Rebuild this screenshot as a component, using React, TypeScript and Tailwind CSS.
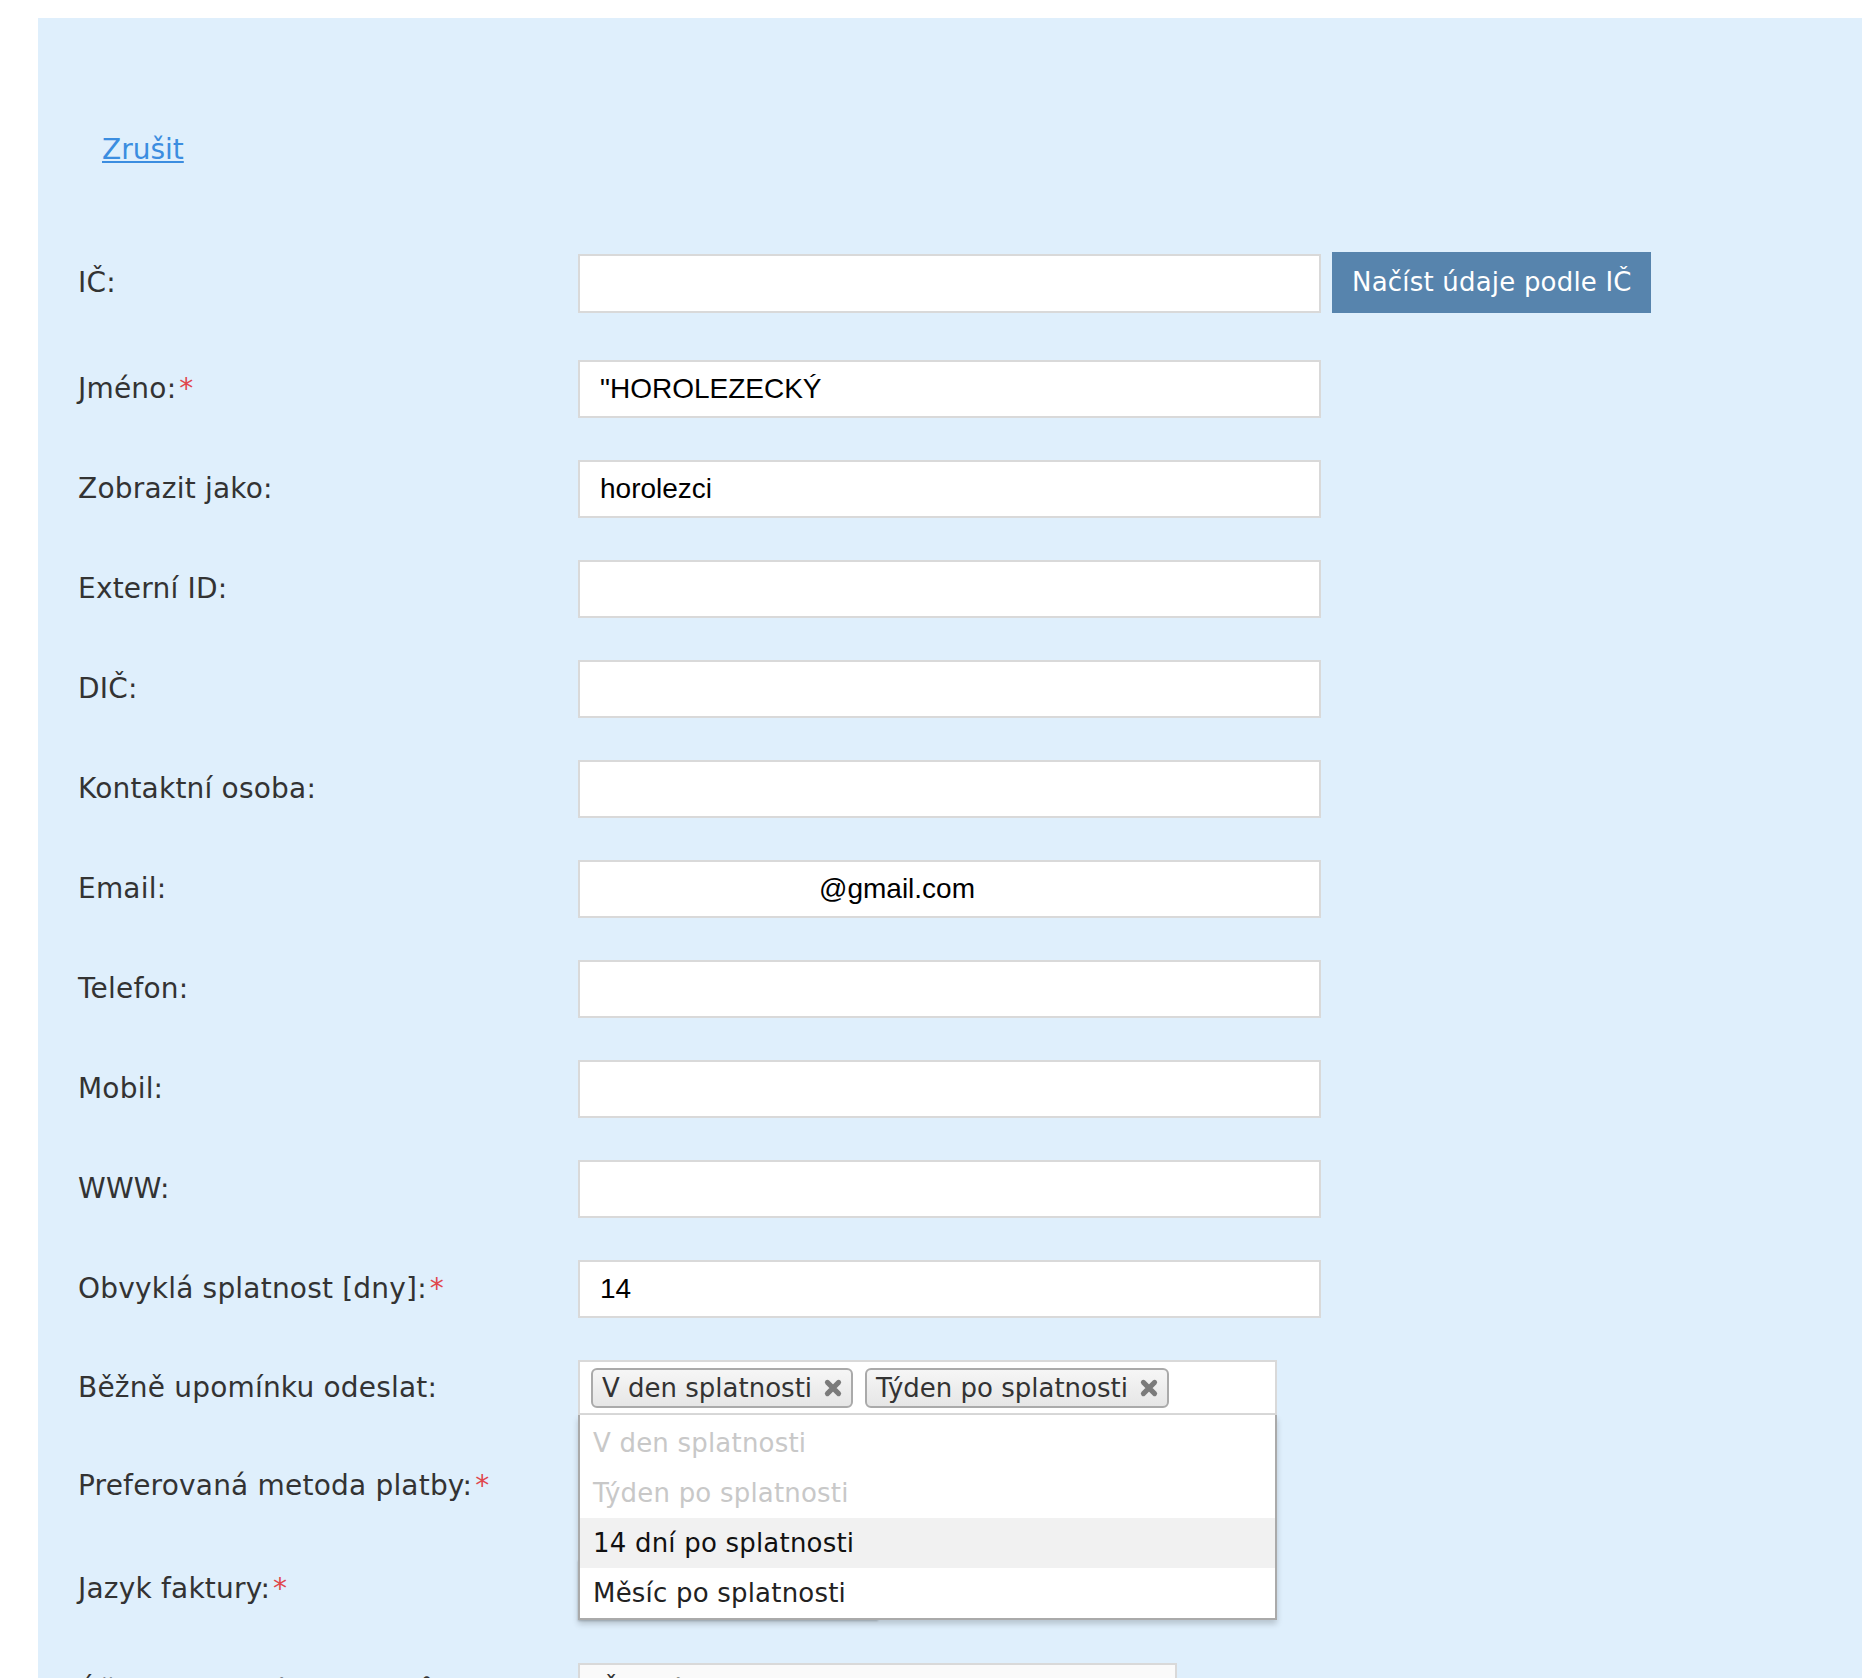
import React from "react";

const labelCls =
  "w-[500px] shrink-0 text-[28px] leading-[34px] tracking-[0.2px] text-[#333] font-['DejaVu_Sans',sans-serif]";
const inputCls =
  "h-[58px] w-[743px] border-2 border-[#d9d9d9] bg-white pl-[20px] text-[28px] text-black font-['Liberation_Sans',Arial,sans-serif] outline-none";

function Star() {
  return <span className="ml-[3px] text-[#e0474c]">*</span>;
}

function XIcon() {
  return (
    <svg width="20" height="20" viewBox="0 0 16 16" className="shrink-0">
      <path d="M3.5 3.5 L12.5 12.5 M12.5 3.5 L3.5 12.5" stroke="#7b7b7b" strokeWidth="4" strokeLinecap="round" />
    </svg>
  );
}

function Tag({ text }: { text: string }) {
  return (
    <div className="flex h-[40px] items-center gap-[11px] rounded-[6px] border-2 border-[#aaa] bg-gradient-to-b from-[#f6f6f6] to-[#e6e6e6] pl-[9px] pr-[8px] text-[26px] text-[#333] font-['DejaVu_Sans',sans-serif] leading-none">
      <span>{text}</span>
      <XIcon />
    </div>
  );
}

function Row({
  label,
  required,
  value,
  mt,
}: {
  label: string;
  required?: boolean;
  value?: string;
  mt: string;
}) {
  return (
    <div className={`flex items-center ${mt}`}>
      <div className={labelCls}>
        {label}
        {required && <Star />}
      </div>
      <input readOnly value={value ?? ""} className={inputCls} />
    </div>
  );
}

export default function App() {
  return (
    <div className="h-[1678px] w-[1862px] overflow-hidden bg-white pl-[38px] pt-[18px]">
      <div className="h-[1660px] w-full bg-[#dfeffc] pl-[40px] pt-[115px]">
        <a
          href="#"
          className="ml-[24px] block w-fit text-[28px] leading-[34px] text-[#3b8de0] underline font-['DejaVu_Sans',sans-serif]"
        >
          Zrušit
        </a>

        <div className="mt-[85px] flex flex-col">
          {/* IČ */}
          <div className="flex h-[61px] items-end">
            <div className={`${labelCls} self-center`}>IČ:</div>
            <input readOnly value="" className="h-[59px] w-[743px] border-2 border-[#d9d9d9] bg-white outline-none" />
            <button className="ml-[11px] h-[61px] w-[319px] bg-[#5784ad] pl-[20px] text-left text-[26px] tracking-[0.2px] text-white font-['DejaVu_Sans',sans-serif]">
              Načíst údaje podle IČ
            </button>
          </div>

          <Row label="Jméno:" required value={'"HOROLEZECKÝ'} mt="mt-[47px]" />
          <Row label="Zobrazit jako:" value="horolezci" mt="mt-[42px]" />
          <Row label="Externí ID:" mt="mt-[42px]" />
          <Row label="DIČ:" mt="mt-[42px]" />
          <Row label="Kontaktní osoba:" mt="mt-[42px]" />
          <div className="mt-[42px] flex items-center">
            <div className={labelCls}>Email:</div>
            <input readOnly value="@gmail.com" className="h-[58px] w-[743px] border-2 border-[#d9d9d9] bg-white pl-[239px] text-[28px] text-black font-['Liberation_Sans',Arial,sans-serif] outline-none" />
          </div>
          <Row label="Telefon:" mt="mt-[42px]" />
          <Row label="Mobil:" mt="mt-[42px]" />
          <Row label="WWW:" mt="mt-[42px]" />
          <Row label="Obvyklá splatnost [dny]:" required value="14" mt="mt-[42px]" />

          {/* Multiselect */}
          <div className="mt-[42px] flex items-center">
            <div className={labelCls}>Běžně upomínku odeslat:</div>
            <div className="relative z-10 w-[699px]">
              <div className="flex h-[55px] items-center gap-[12px] border-2 border-[#d9d9d9] bg-white pl-[11px]">
                <Tag text="V den splatnosti" />
                <Tag text="Týden po splatnosti" />
              </div>
              <div className="absolute left-0 top-full w-full border-2 border-t-0 border-[#aaa] bg-white pt-[3px] shadow-[0_4px_6px_rgba(0,0,0,0.18)] text-[26px] tracking-[0.2px] font-['DejaVu_Sans',sans-serif]">
                <div className="flex h-[50px] items-center pl-[13px] text-[#c8c8c8]">V den splatnosti</div>
                <div className="flex h-[50px] items-center pl-[13px] text-[#c8c8c8]">Týden po splatnosti</div>
                <div className="flex h-[50px] items-center bg-[#f1f1f1] pl-[13px] text-[#111]">14 dní po splatnosti</div>
                <div className="flex h-[50px] items-center pl-[13px] text-[#222]">Měsíc po splatnosti</div>
              </div>
            </div>
          </div>

          <div className="mt-[42px] flex items-center">
            <div className={labelCls}>
              Preferovaná metoda platby:<Star />
            </div>
            <div className="h-[58px] w-[400px] border-2 border-[#d9d9d9] bg-white" />
          </div>

          <div className="mt-[44px] flex items-center">
            <div className={labelCls}>
              Jazyk faktury:<Star />
            </div>
            <div className="h-[60px] w-[300px] border-2 border-[#bbb] bg-white shadow-[0_2px_2px_rgba(0,0,0,0.2)]" />
          </div>

          <div className="mt-[44px] flex items-center">
            <div className={labelCls}>Účet pro zasílání dokladů</div>
            <div className="flex h-[58px] w-[599px] items-center border-2 border-[#d9d9d9] bg-[#fafafa] pl-[20px] text-[28px] text-[#333] font-['DejaVu_Sans',sans-serif]">
              Česká spořitelna
            </div>
          </div>
        </div>
      </div>
    </div>
  );
}
